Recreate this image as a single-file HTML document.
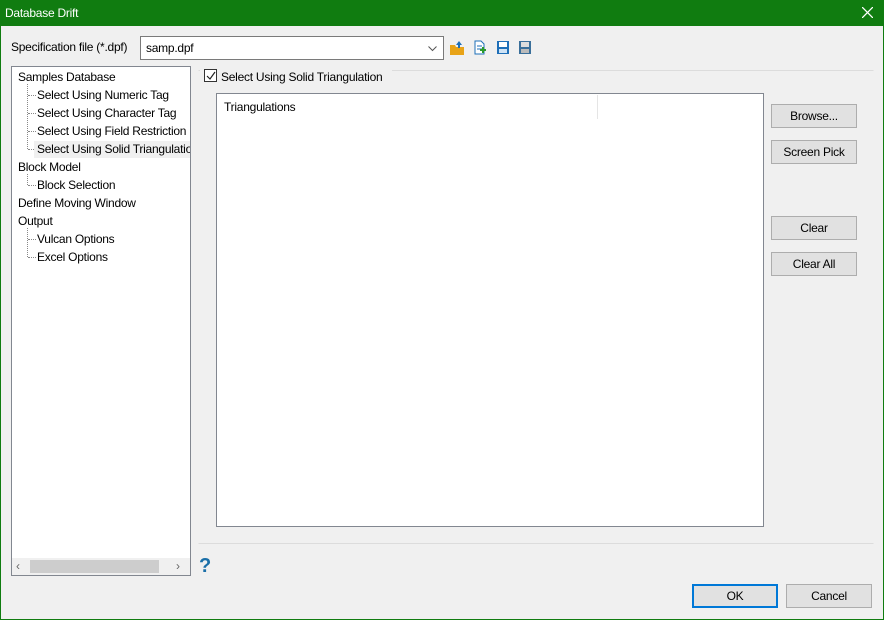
<html><head><style>
*{box-sizing:border-box}
body{margin:0;width:884px;height:620px;background:#f0f0f0;font-family:"Liberation Sans",sans-serif;font-size:12px;letter-spacing:-0.25px;color:#000;position:relative;overflow:hidden}
.a{position:absolute}
.btn{position:absolute;background:#e1e1e1;border:1px solid #adadad;text-align:center;line-height:22px}
.t{position:absolute;white-space:nowrap}
.dv{position:absolute;border-left:1px dotted #888}
.dh{position:absolute;border-top:1px dotted #888;width:8px}
</style></head><body>
<div class="a" style="left:0;top:0;width:884px;height:620px;border:1px solid #107c10"></div>
<div class="a" style="left:0;top:0;width:884px;height:26px;background:#107c10;color:#fff"><span class="t" style="left:5px;top:6px">Database Drift</span>
<svg class="a" style="left:862px;top:7px" width="11" height="11"><path d="M0 0L11 11M11 0L0 11" stroke="#fff" stroke-width="1.3"/></svg></div>
<span class="t" style="left:11px;top:40px">Specification file (*.dpf)</span>
<div class="a" style="left:140px;top:36px;width:304px;height:24px;background:#fff;border:1px solid #7a7a7a"><span class="t" style="left:5px;top:4px">samp.dpf</span>
<svg class="a" style="left:287px;top:9px" width="9" height="6"><path d="M0.5 0.5L4.5 4.5L8.5 0.5" stroke="#555" fill="none"/></svg></div>
<svg class="a" style="left:449px;top:39px" width="86" height="18">
<path d="M1 6h5l1 2h8v8H1z" fill="#e8a317"/><path d="M7 6l3-4 3 4h-2v3H9V6z" fill="#1e6fb8"/>
<path d="M26 2h6l3 3v10h-9z" fill="#fff" stroke="#1e6fb8"/><path d="M28 7h5M28 10h5" stroke="#1e6fb8"/><path d="M31 11h6M34 8v6" stroke="#2a9a2a" stroke-width="2"/>
<rect x="48" y="2" width="12" height="13" fill="#1e6fb8"/><rect x="50" y="3" width="8" height="5" fill="#fff"/><rect x="50" y="10" width="8" height="4" fill="#cfe3f5"/>
<rect x="70" y="2" width="12" height="13" fill="#3a6f9a"/><rect x="72" y="3" width="8" height="5" fill="#ddd"/><rect x="72" y="10" width="8" height="4" fill="#bbb"/>
</svg>
<div class="a" style="left:11px;top:66px;width:180px;height:510px;background:#fff;border:1px solid #828790;overflow:hidden">
<span class="t" style="left:6px;top:3px">Samples Database</span>
<div class="dv" style="left:15px;top:17px;height:65px"></div>
<div class="dh" style="left:16px;top:28px"></div><div class="dh" style="left:16px;top:46px"></div><div class="dh" style="left:16px;top:64px"></div><div class="dh" style="left:16px;top:82px"></div>
<span class="t" style="left:25px;top:21px">Select Using Numeric Tag</span>
<span class="t" style="left:25px;top:39px">Select Using Character Tag</span>
<span class="t" style="left:25px;top:57px">Select Using Field Restriction</span>
<div class="a" style="left:22px;top:74px;width:160px;height:17px;background:#f0f0f0"><span class="t" style="left:3px;top:1px">Select Using Solid Triangulation</span></div>
<span class="t" style="left:6px;top:93px">Block Model</span>
<div class="dv" style="left:15px;top:107px;height:11px"></div><div class="dh" style="left:16px;top:118px"></div>
<span class="t" style="left:25px;top:111px">Block Selection</span>
<span class="t" style="left:6px;top:129px">Define Moving Window</span>
<span class="t" style="left:6px;top:147px">Output</span>
<div class="dv" style="left:15px;top:161px;height:29px"></div><div class="dh" style="left:16px;top:172px"></div><div class="dh" style="left:16px;top:190px"></div>
<span class="t" style="left:25px;top:165px">Vulcan Options</span>
<span class="t" style="left:25px;top:183px">Excel Options</span>
<div class="a" style="left:0;top:491px;width:178px;height:17px;background:#f0f0f0"></div>
<div class="a" style="left:18px;top:493px;width:129px;height:13px;background:#cdcdcd"></div>
<span class="t" style="left:4px;top:492px;color:#666">‹</span><span class="t" style="left:164px;top:492px;color:#666">›</span>
</div>
<div class="a" style="left:198px;top:70px;width:676px;height:474px;border:1px solid #dcdcdc;border-left-color:#f0f0f0;border-right-color:#f0f0f0"></div>
<div class="a" style="left:200px;top:67px;width:192px;height:18px;background:#f0f0f0"></div>
<div class="a" style="left:204px;top:69px;width:13px;height:13px;border:1px solid #333;background:#fff"></div>
<svg class="a" style="left:206px;top:71px" width="10" height="10"><path d="M1 5L4 8L9 1" stroke="#222" fill="none" stroke-width="1.2"/></svg>
<span class="t" style="left:221px;top:70px">Select Using Solid Triangulation</span>
<div class="a" style="left:216px;top:93px;width:548px;height:434px;background:#fff;border:1px solid #828790"></div>
<span class="t" style="left:224px;top:100px">Triangulations</span>
<div class="a" style="left:597px;top:95px;height:24px;border-left:1px solid #e5e5e5"></div>
<div class="btn" style="left:771px;top:104px;width:86px;height:24px">Browse...</div>
<div class="btn" style="left:771px;top:140px;width:86px;height:24px">Screen Pick</div>
<div class="btn" style="left:771px;top:216px;width:86px;height:24px">Clear</div>
<div class="btn" style="left:771px;top:252px;width:86px;height:24px">Clear All</div>
<span class="t" style="left:199px;top:555px;font-size:20px;font-weight:bold;color:#1a6fa8">?</span>
<div class="btn" style="left:692px;top:584px;width:86px;height:24px;border:2px solid #0078d7;line-height:20px">OK</div>
<div class="btn" style="left:786px;top:584px;width:86px;height:24px">Cancel</div>
</body></html>
